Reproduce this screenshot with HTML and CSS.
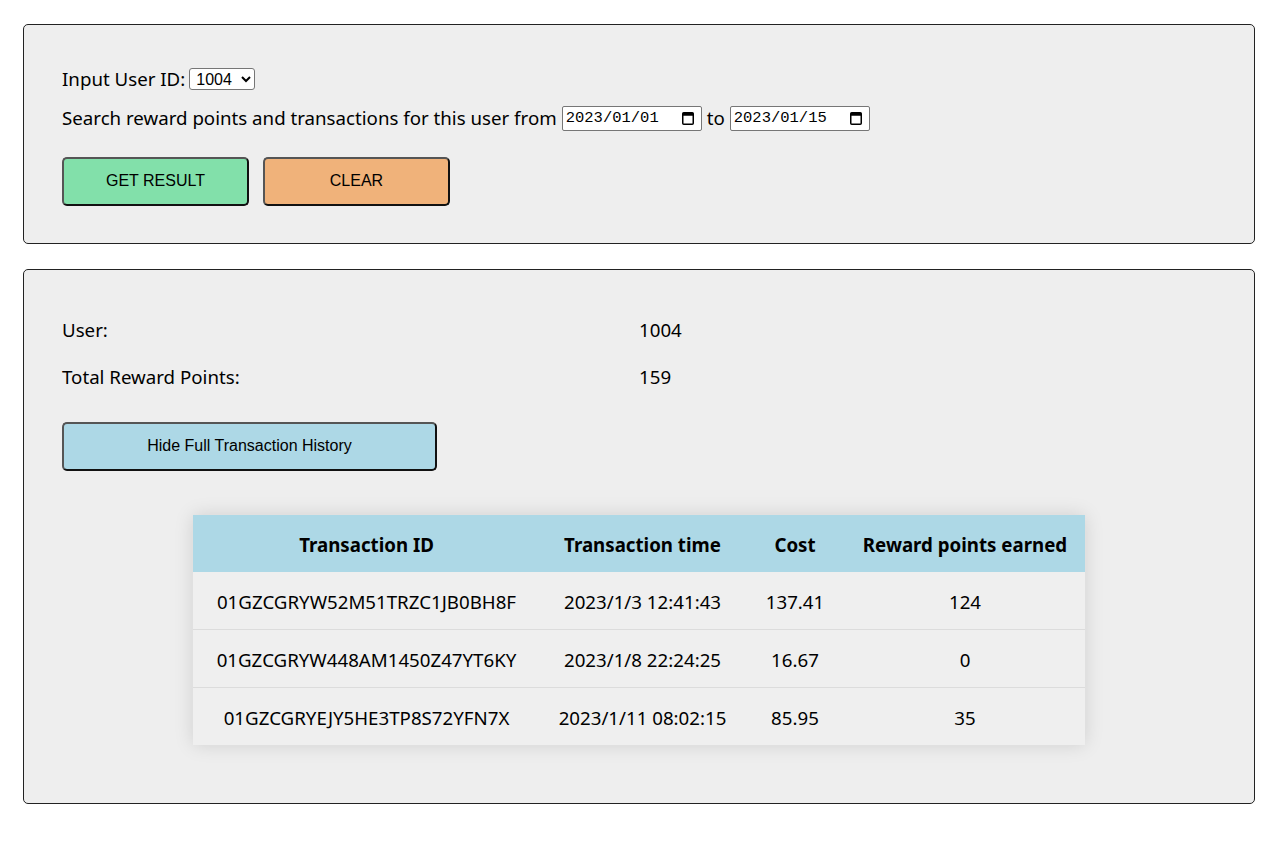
FILE: index.html
```html
<!DOCTYPE html>
<html lang="en">
<head>
<meta charset="utf-8">
<title>Reward Points</title>
<link rel="stylesheet" href="styles.css">
</head>
<body>
<div class="page">
  <section class="panel search-panel">
    <div class="row row-user">
      <label class="label" for="uid">Input User ID:</label>
      <select id="uid" class="select">
        <option>1004</option>
      </select>
    </div>
    <div class="row row-range">
      <span class="label">Search reward points and transactions for this user from</span>
      <span class="date-input">
        <span class="date-text">2023/01/01</span>
        <svg class="cal" width="14" height="16" viewBox="0 0 14 16"><rect x="1.75" y="2.75" width="10.5" height="11.5" rx="1" fill="none" stroke="#000" stroke-width="1.5"/><rect x="1.75" y="2.75" width="10.5" height="3" fill="#000"/></svg>
      </span>
      <span class="label">to</span>
      <span class="date-input">
        <span class="date-text">2023/01/15</span>
        <svg class="cal" width="14" height="16" viewBox="0 0 14 16"><rect x="1.75" y="2.75" width="10.5" height="11.5" rx="1" fill="none" stroke="#000" stroke-width="1.5"/><rect x="1.75" y="2.75" width="10.5" height="3" fill="#000"/></svg>
      </span>
    </div>
    <div class="row row-buttons">
      <button class="btn btn-get">GET RESULT</button>
      <button class="btn btn-clear">CLEAR</button>
    </div>
  </section>

  <section class="panel result-panel">
    <div class="info-row">
      <span>User:</span>
      <span>1004</span>
    </div>
    <div class="info-row">
      <span>Total Reward Points:</span>
      <span>159</span>
    </div>
    <button class="btn btn-hide">Hide Full Transaction History</button>
    <table class="tx-table">
      <thead>
        <tr>
          <th class="c1">Transaction ID</th>
          <th class="c2">Transaction time</th>
          <th class="c3">Cost</th>
          <th class="c4">Reward points earned</th>
        </tr>
      </thead>
      <tbody>
        <tr>
          <td>01GZCGRYW52M51TRZC1JB0BH8F</td>
          <td>2023/1/3 12:41:43</td>
          <td>137.41</td>
          <td>124</td>
        </tr>
        <tr>
          <td>01GZCGRYW448AM1450Z47YT6KY</td>
          <td>2023/1/8 22:24:25</td>
          <td>16.67</td>
          <td>0</td>
        </tr>
        <tr>
          <td>01GZCGRYEJY5HE3TP8S72YFN7X</td>
          <td>2023/1/11 08:02:15</td>
          <td>85.95</td>
          <td>35</td>
        </tr>
      </tbody>
    </table>
  </section>
</div>
</body>
</html>
```

FILE: styles.css
```css
html, body {
  margin: 0;
  padding: 0;
  background: #ffffff;
}

body {
  font-family: "Noto Sans", "Open Sans", sans-serif;
  font-size: 18.7px;
  line-height: 24px;
  color: #000;
}

.page {
  padding: 24px 25px 0 23px;
  display: flex;
  flex-direction: column;
  gap: 25px;
}

.panel {
  background: #eeeeee;
  border: 1px solid #222;
  border-radius: 5px;
}

.search-panel {
  padding: 42px 38px 37px;
  display: flex;
  flex-direction: column;
}

.row {
  display: flex;
  align-items: center;
  gap: 5px;
}

.row-user {
  height: 24px;
  gap: 4px;
}

.row-range {
  margin-top: 14px;
  height: 26px;
}

.row-buttons {
  margin-top: 26px;
  gap: 14px;
}

.select {
  font-family: "Liberation Sans", Arial, sans-serif;
  font-size: 16px;
  width: 66px;
  height: 22px;
  border: 1px solid #767676;
  border-radius: 3px;
  background: #fff;
  color: #000;
  padding: 0 0 0 2px;
  margin: 0;
}

.date-input {
  display: inline-flex;
  align-items: center;
  justify-content: space-between;
  box-sizing: border-box;
  width: 140px;
  height: 25px;
  padding: 0 6px 0 3px;
  background: #fff;
  border: 1px solid #767676;
  border-radius: 2px;
}

.date-text {
  font-family: "Liberation Mono", monospace;
  font-size: 15.5px;
  line-height: 20px;
  letter-spacing: 0;
}

.cal {
  display: block;
}

.btn {
  font-family: "Liberation Sans", Arial, sans-serif;
  font-size: 16px;
  color: #000;
  height: 49px;
  border: 2px solid;
  border-color: #555 #111 #111 #555;
  border-radius: 5px;
  padding: 0 0 2px;
  cursor: pointer;
}

.btn-get {
  width: 187px;
  background: #82e0aa;
}

.btn-clear {
  width: 187px;
  background: #f0b27a;
}

.result-panel {
  padding: 48px 38px 58px;
  display: flex;
  flex-direction: column;
}

.info-row {
  display: grid;
  grid-template-columns: 1fr 1fr;
  height: 24px;
}

.info-row + .info-row {
  margin-top: 23px;
}

.btn-hide {
  margin-top: 33px;
  width: 375px;
  background: #add8e6;
  align-self: flex-start;
}

.tx-table {
  margin: 44px auto 0;
  width: 892px;
  border-collapse: collapse;
  background: #efefef;
  box-shadow: 0 0 18px rgba(0, 0, 0, 0.13);
}

.tx-table th {
  background: #add8e6;
  font-weight: 700;
  height: 55px;
  padding: 2px 0 0;
  text-align: center;
}

.tx-table td {
  height: 55px;
  padding: 2px 0 0;
  text-align: center;
  border-top: 1px solid #dcdcdc;
}

.tx-table thead + tbody tr:first-child td {
  border-top: none;
}

.c1 { width: 347px; }
.c2 { width: 205px; }
.c3 { width: 100px; }
.c4 { width: 240px; }
```
